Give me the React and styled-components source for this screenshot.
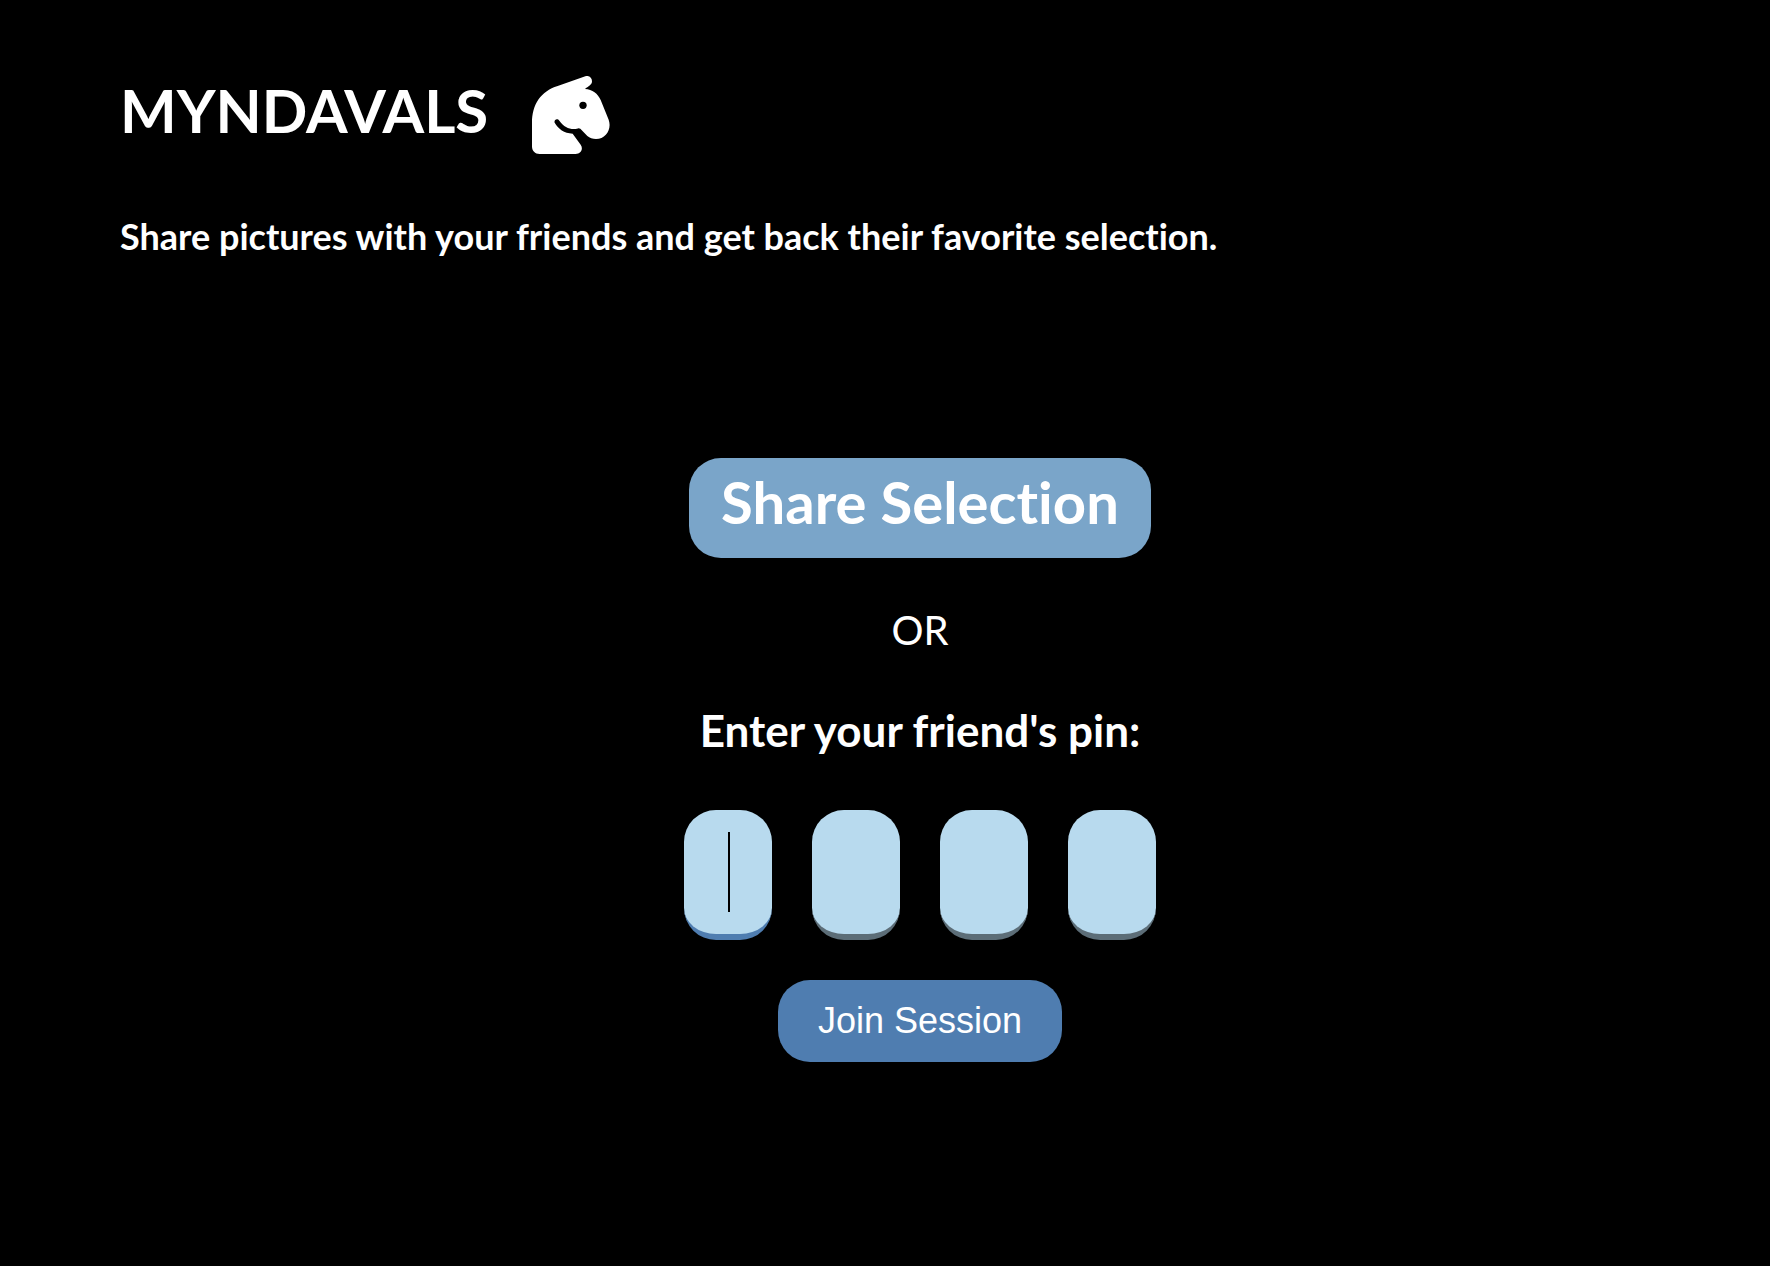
import React, { useState } from "react";
import styled, { createGlobalStyle } from "styled-components";

const GlobalStyle = createGlobalStyle`
  *, *::before, *::after { box-sizing: border-box; }
  body {
    margin: 0;
    background: #000;
    color: #fff;
    font-family: Lato, "Open Sans", sans-serif;
    font-variant-ligatures: none;
  }
`;

const Page = styled.div`
  min-height: 100vh;
  padding: 70px 50px 70px 120px;
`;

const Brand = styled.header`
  display: flex;
  align-items: flex-start;
  gap: 44px;
  height: 90px;
`;

const Title = styled.h1`
  margin: 0;
  font-size: 60px;
  line-height: 80px;
  font-weight: 700;
`;

const Knight = styled.svg`
  align-self: center;
  width: 78px;
  height: 78px;
  flex: none;
`;

const Tagline = styled.p`
  margin: 52px 0 0;
  font-size: 36px;
  line-height: 48px;
  font-weight: 700;
`;

const Actions = styled.main`
  display: flex;
  flex-direction: column;
  align-items: center;
  margin-top: 198px;
`;

const Button = styled.button`
  border: 0;
  border-radius: 32px;
  color: #fff;
  cursor: pointer;
`;

const ShareButton = styled(Button)`
  padding: 8px 32px 20px;
  background: #7aa5c9;
  font-family: inherit;
  font-variant-ligatures: none;
  font-size: 58px;
  line-height: 72px;
  font-weight: 700;
`;

const Divider = styled.p`
  margin: 44px 0 0;
  font-size: 40px;
  line-height: 56px;
`;

const PinForm = styled.form`
  display: flex;
  flex-direction: column;
  align-items: center;
`;

const PinFields = styled.fieldset`
  display: flex;
  flex-direction: column;
  align-items: center;
  margin: 44px 0 0;
  padding: 0;
  border: 0;
`;

const PinLegend = styled.legend`
  margin: 0 auto 52px;
  padding: 0;
  font-size: 44px;
  line-height: 56px;
  font-weight: 700;
`;

const PinRow = styled.div`
  display: flex;
  gap: 40px;
`;

const PinCell = styled.div`
  position: relative;
`;

const PinInput = styled.input`
  display: block;
  width: 88px;
  height: 130px;
  padding: 0;
  border: 0;
  border-bottom: 6px solid ${(p) => (p.$active ? "#4f7db0" : "#5c6d77")};
  border-radius: 32px;
  outline: none;
  background: #b8daee;
  color: #000;
  caret-color: transparent;
  font-family: "Liberation Sans", Arial, sans-serif;
  font-size: 70px;
  text-align: center;
`;

const Caret = styled.span`
  position: absolute;
  top: 22px;
  left: 50%;
  width: 2px;
  height: 80px;
  background: #000;
  pointer-events: none;
`;

const JoinButton = styled(Button)`
  margin-top: 40px;
  padding: 20px 40px;
  background: #4f7db0;
  font-family: "Liberation Sans", Arial, sans-serif;
  font-size: 36px;
  line-height: 42px;
`;

function KnightIcon() {
  return (
    <Knight viewBox="66 48 234 234" aria-hidden="true">
      <path
        fill="#fff"
        d="M226 49C237 45 246 53 246 64C246 74 237 78 225 87C247 88 264 101 272 120L296 179C306 207 288 237 258 237C248 237 239 234 232 228L211 206Q206 204 201 206C180 209 163 203 148 182C142 173 131 179 134 188C145 207 162 219 188 221L212 254C221 267 212 282 197 282H89C75 282 66 273 66 259V190C66 133 92 94 143 78Z"
      />
      <circle cx="219" cy="136" r="11" fill="#000" />
    </Knight>
  );
}

export default function App() {
  const [digits, setDigits] = useState(["", "", "", ""]);
  const [active, setActive] = useState(0);

  const update = (index, value) =>
    setDigits(digits.map((d, i) => (i === index ? value : d)));

  return (
    <Page>
      <GlobalStyle />
      <Brand>
        <Title>MYNDAVALS</Title>
        <KnightIcon />
      </Brand>
      <Tagline>
        Share pictures with your friends and get back their favorite selection.
      </Tagline>
      <Actions>
        <ShareButton type="button">Share Selection</ShareButton>
        <Divider>OR</Divider>
        <PinForm onSubmit={(e) => e.preventDefault()}>
          <PinFields>
            <PinLegend>Enter your friend's pin:</PinLegend>
            <PinRow>
              {digits.map((digit, i) => (
                <PinCell key={i}>
                  <PinInput
                    aria-label={`Pin digit ${i + 1}`}
                    inputMode="numeric"
                    maxLength={1}
                    value={digit}
                    $active={active === i}
                    onFocus={() => setActive(i)}
                    onChange={(e) => update(i, e.target.value)}
                  />
                  {active === i && !digit && <Caret />}
                </PinCell>
              ))}
            </PinRow>
          </PinFields>
          <JoinButton type="submit">Join Session</JoinButton>
        </PinForm>
      </Actions>
    </Page>
  );
}
